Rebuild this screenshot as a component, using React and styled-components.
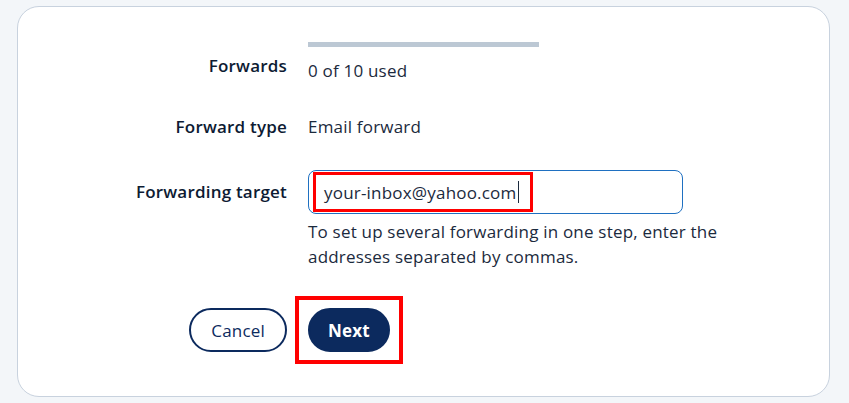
import React from "react";
import styled, { createGlobalStyle } from "styled-components";

const GlobalStyle = createGlobalStyle`
  html, body {
    margin: 0;
    padding: 0;
    background: #f3f6f9;
    font-family: "Open Sans", "Noto Sans", Arial, sans-serif;
    color: #0e1f38;
  }
`;

const Page = styled.div`
  padding: 6px 19px 6px 17px;
`;

const Card = styled.div`
  background: #ffffff;
  border: 1px solid #c8d2de;
  border-radius: 22px;
  height: 391px;
  padding-top: 35px;
  box-sizing: border-box;
`;

const Row = styled.div`
  display: grid;
  grid-template-columns: 269px 1fr;
  column-gap: 21px;
  align-items: ${(p) => p.$align || "start"};
  margin-bottom: ${(p) => p.$gap || 0}px;
`;

const Label = styled.div`
  text-align: right;
  font-size: 17px;
  letter-spacing: 0.2px;
  font-weight: 600;
  line-height: 24px;
  color: #0d1b33;
  padding-top: ${(p) => p.$top || 0}px;
`;

const Value = styled.div`
  font-size: 17px;
  letter-spacing: 0.2px;
  line-height: 24px;
  color: #1b2a3d;
`;

const Bar = styled.div`
  width: 231px;
  height: 5px;
  background: #bcc8d4;
  margin-bottom: 12px;
`;

const FakeInput = styled.div`
  width: 375px;
  height: 44px;
  box-sizing: border-box;
  border: 1px solid #1f70c1;
  border-radius: 8px;
  display: flex;
  align-items: center;
  padding-left: 4px;
`;

const Highlight = styled.span`
  display: inline-flex;
  align-items: center;
  height: 40px;
  box-sizing: border-box;
  border: 3px solid #ff0000;
  padding: 0 11px 0 8px;
  font-size: 17px;
  letter-spacing: 0.2px;
  color: #1b2a3d;
`;

const Caret = styled.span`
  display: inline-block;
  width: 1px;
  height: 22px;
  background: #1b2a3d;
  margin-left: 1px;
`;

const Help = styled.p`
  margin: 5px 0 0;
  width: 420px;
  font-size: 17px;
  letter-spacing: 0.2px;
  line-height: 25px;
  color: #1b2a3d;
`;

const Actions = styled.div`
  display: flex;
  justify-content: flex-end;
  align-items: center;
`;

const Button = styled.button`
  height: 44px;
  box-sizing: border-box;
  border-radius: 22px;
  font-family: inherit;
  font-size: 17px;
  letter-spacing: 0.2px;
  border: 2px solid #0c2a5e;
  padding: 0 ${(p) => (p.$primary ? 18 : 20)}px;
  background: ${(p) => (p.$primary ? "#0c2a5e" : "#ffffff")};
  color: ${(p) => (p.$primary ? "#ffffff" : "#0c2a5e")};
  font-weight: ${(p) => (p.$primary ? 700 : 500)};
  cursor: pointer;
`;

const Marked = styled.div`
  display: inline-flex;
  border: 4px solid #ff0000;
  padding: 8px 9px;
  margin-left: -13px;
  margin-top: -12px;
  margin-bottom: -11px;
`;

export default function App() {
  return (
    <Page>
      <GlobalStyle />
      <Card>
        <Row $gap={32}>
          <Label $top={12}>Forwards</Label>
          <Value>
            <Bar />
            0 of 10 used
          </Value>
        </Row>
        <Row $gap={31}>
          <Label>Forward type</Label>
          <Value>Email forward</Value>
        </Row>
        <Row $gap={0} $align="center">
          <Label>Forwarding target</Label>
          <FakeInput>
            <Highlight>
              your-inbox@yahoo.com
              <Caret />
            </Highlight>
          </FakeInput>
        </Row>
        <Row $gap={39}>
          <div />
          <Help>
            To set up several forwarding in one step, enter the addresses
            separated by commas.
          </Help>
        </Row>
        <Row>
          <Actions>
            <Button>Cancel</Button>
          </Actions>
          <div>
            <Marked>
              <Button $primary>Next</Button>
            </Marked>
          </div>
        </Row>
      </Card>
    </Page>
  );
}
